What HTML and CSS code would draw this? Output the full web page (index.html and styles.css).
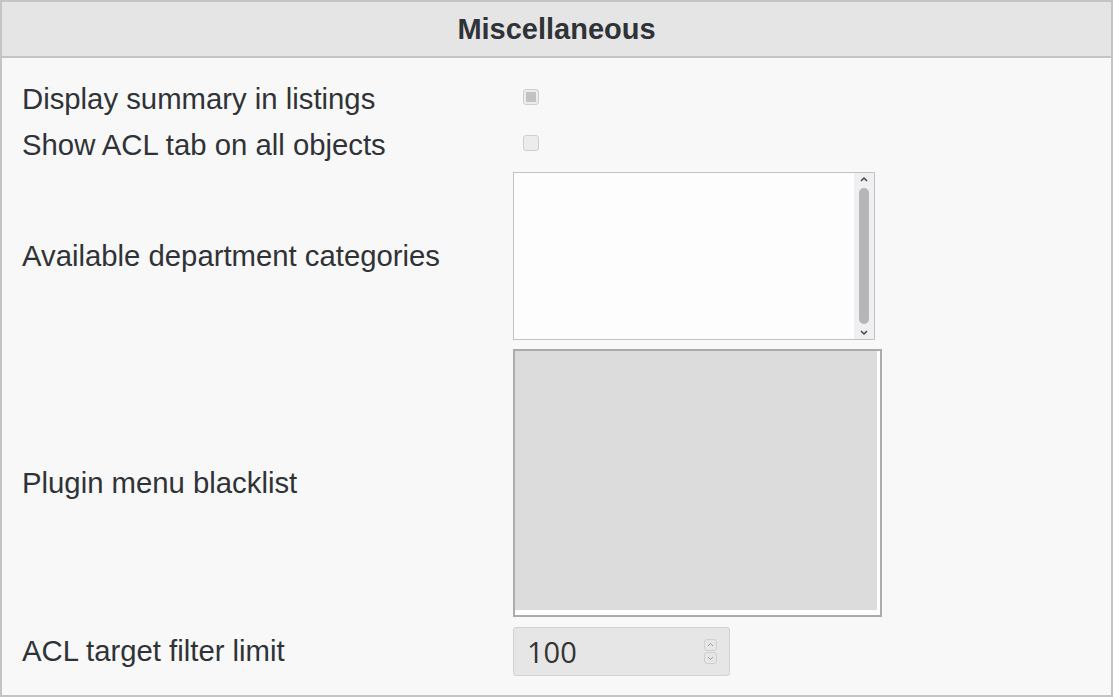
FILE: index.html
```html
<!DOCTYPE html>
<html lang="en">

<head>
 <meta charset="UTF-8">
 <meta name="viewport" content="width=device-width, initial-scale=1.0">
 <title>Miscellaneous</title>
 <link rel="stylesheet" href="styles.css">
</head>

<body>
 <div class="panel">
  <div class="panel-head">Miscellaneous</div>
  <div class="panel-body">
   <div class="row row-check">
    <label>Display summary in listings</label>
    <span class="check checked"><span></span></span>
   </div>
   <div class="row row-check">
    <label>Show ACL tab on all objects</label>
    <span class="check"></span>
   </div>
   <div class="row row-list">
    <label>Available department categories</label>
    <div class="listbox">
     <div class="listbox-items"></div>
     <div class="scroll">
      <svg width="10" height="7" viewBox="0 0 10 7"><path d="M2 5 L5 2 L8 5" fill="none" stroke="#444" stroke-width="1.5"/></svg>
      <div class="thumb"></div>
      <svg width="10" height="7" viewBox="0 0 10 7"><path d="M2 2 L5 5 L8 2" fill="none" stroke="#444" stroke-width="1.5"/></svg>
     </div>
    </div>
   </div>
   <div class="row row-black">
    <label>Plugin menu blacklist</label>
    <div class="blacklist">
     <div class="blacklist-fill"></div>
    </div>
   </div>
   <div class="row row-num">
    <label>ACL target filter limit</label>
    <div class="number">
     <span>100</span>
     <div class="spin">
      <svg width="9" height="6" viewBox="0 0 9 6"><path d="M2 4 L4.5 1.5 L7 4" fill="none" stroke="#999" stroke-width="1"/></svg>
      <svg width="9" height="6" viewBox="0 0 9 6"><path d="M2 2 L4.5 4.5 L7 2" fill="none" stroke="#999" stroke-width="1"/></svg>
     </div>
    </div>
   </div>
  </div>
 </div>
</body>

</html>
```

FILE: styles.css
```css
body {
 margin: 0;
 font-family: "Liberation Sans", Arial, sans-serif;
 color: #2f3337;
}

.panel {
 width: 1113px;
 height: 697px;
 box-sizing: border-box;
 border: 2px solid #c4c4c4;
 background-color: #f8f8f8;
}

.panel-head {
 height: 54px;
 line-height: 54px;
 text-align: center;
 font-size: 29px;
 font-weight: bold;
 background-color: #e5e5e5;
 border-bottom: 2px solid #c4c4c4;
}

.panel-body {
 padding: 17px 20px 0;
}

.row {
 display: flex;
 align-items: center;
}

.row label {
 width: 491px;
 font-size: 29.3px;
}

.row-check {
 height: 46px;
}

.row-check label {
 padding-top: 2px;
}

.check {
 width: 14px;
 height: 14px;
 margin-left: 10px;
 margin-top: -2px;
 border: 1px solid #cfcfcf;
 border-radius: 3px;
 background-color: #ececec;
 display: flex;
 align-items: center;
 justify-content: center;
}

.check.checked span {
 width: 10px;
 height: 10px;
 background-color: #c3c3c3;
 border-radius: 1px;
}

.row-list {
 padding: 5px 0;
}

.listbox {
 width: 360px;
 height: 166px;
 border: 1px solid #c2c2c2;
 background-color: #fdfdfd;
 display: flex;
}

.listbox-items {
 flex: 1;
}

.scroll {
 width: 20px;
 background-color: #f0f0f2;
 display: flex;
 flex-direction: column;
 align-items: center;
 padding: 3px 0;
 box-sizing: border-box;
}

.thumb {
 flex: 1;
 width: 10px;
 margin: 5px 0;
 background-color: #b6b6b8;
 border-radius: 5px;
}

.row-black {
 padding: 4px 0 5px;
}

.blacklist {
 width: 362px;
 height: 259px;
 border: 2px solid #ababab;
 background-color: #fdfdfd;
 padding: 0 3px 5px 0;
}

.blacklist-fill {
 height: 100%;
 background-color: #dcdcdc;
}

.row-num {
 padding: 5px 0;
}

.row-num label {
 margin-top: -1px;
}

.number {
 border: 1px solid #d2d2d2;
 border-radius: 3px;
 background-color: #e6e6e6;
 display: flex;
 align-items: center;
 justify-content: space-between;
 padding: 0 12px 0 13px;
 box-sizing: border-box;
 width: 217px;
 height: 49px;
 font-family: "Open Sans", sans-serif;
 font-size: 29px;
 color: #333;
}

.number span {
 margin-top: -1px;
}

.spin {
 display: flex;
 flex-direction: column;
 gap: 1px;
 margin-top: -1px;
}

.spin svg {
 border: 1px solid #d0d0d0;
 border-radius: 3px;
 padding: 2px 1px;
 display: block;
}
```
